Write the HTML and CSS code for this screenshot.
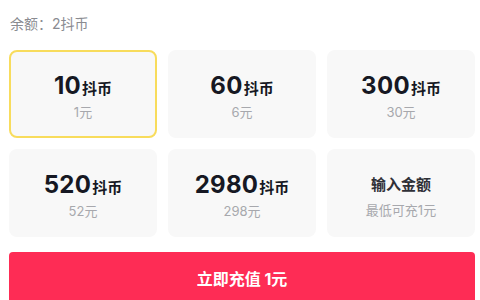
FILE: index.html
```html
<!DOCTYPE html>
<html lang="zh-CN">
<head>
    <meta charset="UTF-8">
    <meta name="viewport" content="width=device-width, initial-scale=1.0">
    <title>充值</title>
    <link rel="stylesheet" href="styles.css">
</head>
<body>
    <div class="page">
        <div class="balance">余额：2抖币</div>
        <!-- options -->
        <div class="options">
            <div class="option selected">
                <div class="coins"><span class="num">10</span><span class="unit">抖币</span></div>
                <div class="price">1元</div>
            </div>
            <div class="option">
                <div class="coins"><span class="num">60</span><span class="unit">抖币</span></div>
                <div class="price">6元</div>
            </div>
            <div class="option">
                <div class="coins"><span class="num">300</span><span class="unit">抖币</span></div>
                <div class="price">30元</div>
            </div>
            <div class="option">
                <div class="coins"><span class="num">520</span><span class="unit">抖币</span></div>
                <div class="price">52元</div>
            </div>
            <div class="option">
                <div class="coins"><span class="num">2980</span><span class="unit">抖币</span></div>
                <div class="price">298元</div>
            </div>
            <div class="option">
                <div class="custom">输入金额</div>
                <div class="price">最低可充1元</div>
            </div>
        </div>
        <button class="pay-btn">立即充值 1元</button>
    </div>
</body>
</html>
```

FILE: styles.css
```css
body {
    margin: 0;
    background: #ffffff;
    font-family: Inter, "Noto Sans CJK SC", sans-serif;
    color: #161823;
}
.page {
    width: 466px;
    padding: 0 5px 0 9px;
}
.balance {
    height: 50px;
    line-height: 47px;
    font-size: 14px;
    color: #8a8b91;
    padding-left: 1px;
}
.options {
    display: grid;
    grid-template-columns: repeat(3, 1fr);
    grid-auto-rows: 88px;
    gap: 11px;
}
.option {
    background: #f8f8f8;
    border: 2px solid #f8f8f8;
    border-radius: 8px;
    display: flex;
    flex-direction: column;
    align-items: center;
    justify-content: center;
    box-sizing: border-box;
    padding-top: 3px;
}
.option.selected {
    border-color: #f8dc5c;
}
.coins {
    display: flex;
    align-items: baseline;
    height: 30px;
}
.num {
    font-size: 24px;
    font-weight: 700;
    letter-spacing: 0.3px;
}
.unit {
    font-size: 15px;
    font-weight: 700;
    margin-left: 1px;
}
.custom {
    font-size: 15px;
    font-weight: 700;
    height: 28px;
    line-height: 28px;
    color: #2f3037;
}
.price {
    font-size: 13px;
    color: #a7a8ad;
    margin-top: 1px;
}
.pay-btn {
    display: block;
    width: 100%;
    height: 56px;
    margin-top: 15px;
    border: none;
    border-radius: 4px;
    background: #fe2c55;
    color: #ffffff;
    font-family: inherit;
    font-size: 16px;
    font-weight: 700;
    padding-bottom: 6px;
}
```
